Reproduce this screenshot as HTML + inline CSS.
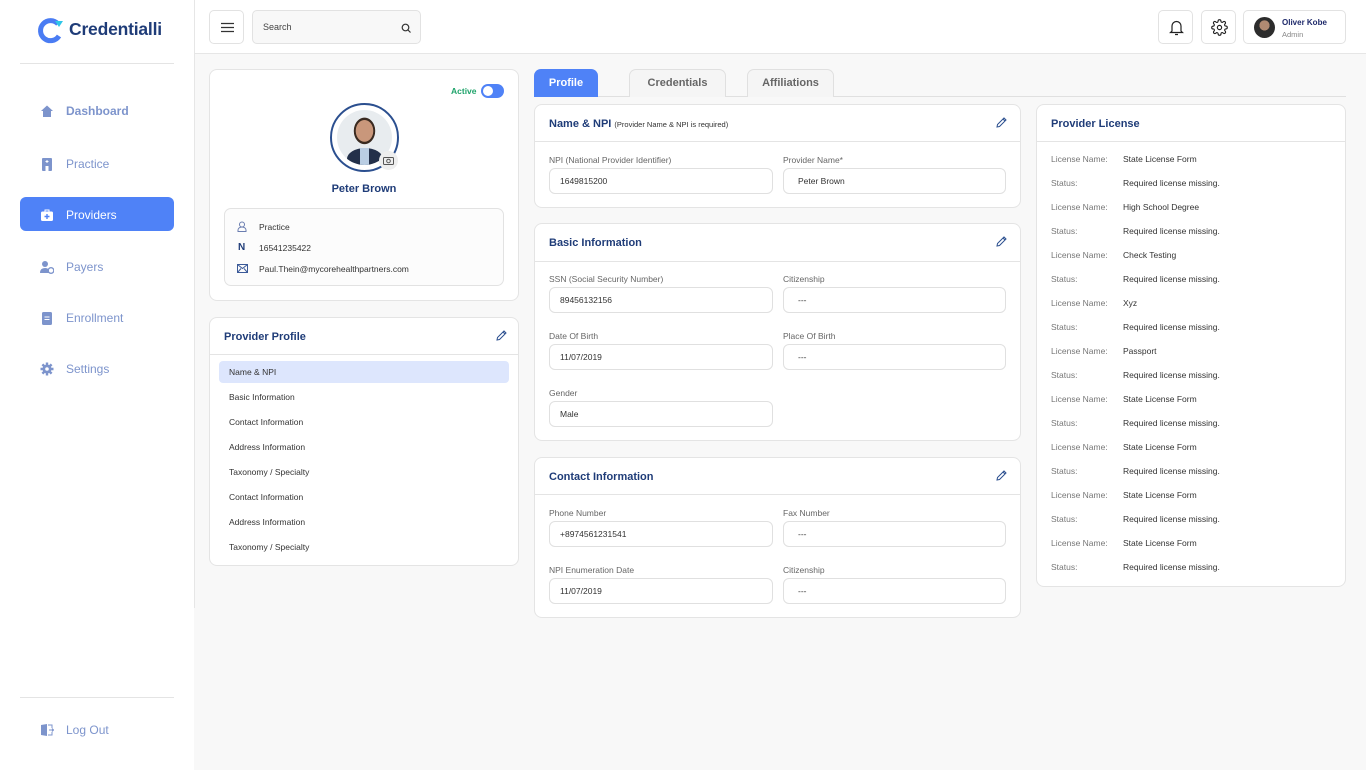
<!DOCTYPE html>
<html><head><meta charset="utf-8">
<style>
*{box-sizing:border-box;margin:0;padding:0}
body{width:1366px;height:770px;background:#f8f8f8;font-family:"Liberation Sans",sans-serif;position:relative;overflow:hidden;color:#333}
.a{position:absolute}
.side{left:0;top:0;width:194px;height:770px;background:#fff}
.sb{left:194px;top:0;width:1px;height:608px;background:#e6e6e6}
.nav{left:40px;width:130px;font-size:12px;color:#7d94cc;display:flex;align-items:center;height:20px}
.nav svg{width:14px;height:14px;margin-right:12px}
.hdr{left:195px;top:0;width:1171px;height:54px;background:#fff;border-bottom:1px solid #e6e6e6}
.box{border:1px solid #e2e2e2;border-radius:5px;background:#fff}
.card{background:#fff;border:1px solid #e4e4e4;border-radius:8px}
.ch{position:absolute;left:0;right:0;top:0;border-bottom:1px solid #e4e4e4}
.ct{position:absolute;left:14px;font-size:11px;font-weight:bold;color:#1f3c78;white-space:nowrap}
.lbl{font-size:8.5px;color:#666}
.inp{border:1px solid #e0e0e0;border-radius:6px;height:26px;font-size:8.5px;color:#333;padding:0 10px;display:flex;align-items:center;background:#fff}
.pi{left:229px;font-size:8.5px;color:#333;white-space:nowrap}
.lr{font-size:8.5px;left:0;width:290px;height:12px;white-space:nowrap}
.lr .k{position:absolute;left:0;color:#777}
.lr .v{position:absolute;left:72px;color:#333}
</style></head><body>
<div class="a side"></div>
<div class="a sb"></div>
<svg class="a" style="left:37px;top:17px" width="28" height="27" viewBox="0 0 28 27"><path d="M21 7 A10 10 0 1 0 22 19" fill="none" stroke="#4a7cf3" stroke-width="5"/><path d="M18 4 L26 4 L22 10Z" fill="#2ec6e8"/></svg>
<div class="a" style="left:69px;top:19px;font-size:17.5px;font-weight:bold;color:#1f3c78;letter-spacing:-0.2px">Credentialli</div>
<div class="a" style="left:20px;top:63px;width:154px;height:1px;background:#e4e4e4"></div>
<div class="a nav" style="top:101px;font-weight:bold"><svg viewBox="0 0 14 14"><path d="M1 7 L7 1.5 L13 7 H11 V13 H3 V7Z" fill="#7d94cc"/></svg>Dashboard</div>
<div class="a nav" style="top:154px"><svg viewBox="0 0 14 14"><rect x="2" y="1" width="10" height="13" rx="1" fill="#7d94cc"/><rect x="5.5" y="9" width="3" height="5" fill="#fff"/><path d="M7 3v3M5.5 4.5h3" stroke="#fff" stroke-width="1"/></svg>Practice</div>
<div class="a" style="left:20px;top:197px;width:154px;height:34px;background:#4f82f7;border-radius:6px"></div>
<div class="a nav" style="top:205px;color:#fff"><svg viewBox="0 0 14 14"><rect x="1" y="3.5" width="12" height="9.5" rx="1.5" fill="#fff"/><path d="M5 3.5V2h4v1.5" stroke="#fff" fill="none"/><path d="M7 6v5M4.5 8.5h5" stroke="#4f82f7" stroke-width="1.4"/></svg>Providers</div>
<div class="a nav" style="top:257px"><svg viewBox="0 0 14 14"><circle cx="5" cy="4" r="3" fill="#7d94cc"/><path d="M0 13 Q0 8 5 8 Q8 8 9 10 V13Z" fill="#7d94cc"/><circle cx="11" cy="10.5" r="2.8" fill="none" stroke="#7d94cc" stroke-width="1.3"/></svg>Payers</div>
<div class="a nav" style="top:308px"><svg viewBox="0 0 14 14"><rect x="2" y="1" width="10" height="13" rx="1.5" fill="#7d94cc"/><path d="M4.5 6h5M4.5 8.5h5" stroke="#fff"/></svg>Enrollment</div>
<div class="a nav" style="top:359px"><svg viewBox="0 0 14 14"><circle cx="7" cy="7" r="4.5" fill="#7d94cc"/><path d="M7 0.5v13M0.5 7h13M2.4 2.4l9.2 9.2M11.6 2.4l-9.2 9.2" stroke="#7d94cc" stroke-width="2.4"/><circle cx="7" cy="7" r="1.8" fill="#fff"/></svg>Settings</div>
<div class="a" style="left:20px;top:697px;width:154px;height:1px;background:#e4e4e4"></div>
<div class="a nav" style="top:720px"><svg viewBox="0 0 14 14"><path d="M1 2 L7 1 V13 L1 12Z" fill="#7d94cc"/><path d="M8 2h4v3M12 9v3H8M9 7h5M12 5.5l1.5 1.5-1.5 1.5" stroke="#7d94cc" fill="none"/></svg>Log Out</div>

<div class="a hdr"></div>
<div class="a box" style="left:209px;top:10px;width:35px;height:34px"><svg class="a" style="left:11px;top:11px" width="13" height="11"><path d="M0 1.5h13M0 5.5h13M0 9.5h13" stroke="#333" stroke-width="1.3"/></svg></div>
<div class="a box" style="left:252px;top:10px;width:169px;height:34px;background:#f8f8f8;font-size:9px;color:#444;padding:11px 10px">Search<svg class="a" style="right:9px;top:12px" width="10" height="10"><circle cx="4.5" cy="4.5" r="3.3" stroke="#333" fill="none" stroke-width="1.2"/><path d="M7 7l2.5 2.5" stroke="#333" stroke-width="1.2"/></svg></div>
<div class="a box" style="left:1158px;top:10px;width:35px;height:34px"><svg class="a" style="left:10px;top:8px" width="15" height="17" viewBox="0 0 15 17"><path d="M3 12V7a4.5 4.5 0 0 1 9 0v5l1.5 1.5h-12Z M6 15.5h3" stroke="#222" fill="none" stroke-width="1.2"/></svg></div>
<div class="a box" style="left:1201px;top:10px;width:35px;height:34px"><svg class="a" style="left:9px;top:8px" width="17" height="17" viewBox="0 0 24 24"><circle cx="12" cy="12" r="3" stroke="#222" fill="none" stroke-width="1.6"/><path d="M19.4 15a1.7 1.7 0 0 0 .3 1.8l.1.1a2 2 0 1 1-2.8 2.8l-.1-.1a1.7 1.7 0 0 0-1.8-.3 1.7 1.7 0 0 0-1 1.5V21a2 2 0 1 1-4 0v-.1a1.7 1.7 0 0 0-1.1-1.5 1.7 1.7 0 0 0-1.800.3l-.1.1a2 2 0 1 1-2.8-2.8l.1-.1a1.7 1.7 0 0 0 .3-1.8 1.7 1.7 0 0 0-1.5-1H3a2 2 0 1 1 0-4h.1a1.7 1.7 0 0 0 1.5-1.1 1.7 1.7 0 0 0-.3-1.8l-.1-.1a2 2 0 1 1 2.8-2.8l.1.1a1.7 1.7 0 0 0 1.8.3H9a1.7 1.7 0 0 0 1-1.5V3a2 2 0 1 1 4 0v.1a1.7 1.7 0 0 0 1 1.5 1.7 1.7 0 0 0 1.8-.3l.1-.1a2 2 0 1 1 2.8 2.8l-.1.1a1.7 1.7 0 0 0-.3 1.8V9a1.7 1.7 0 0 0 1.5 1H21a2 2 0 1 1 0 4h-.1a1.7 1.7 0 0 0-1.5 1z" stroke="#222" fill="none" stroke-width="1.6"/></svg></div>
<div class="a box" style="left:1243px;top:10px;width:103px;height:34px">
<div class="a" style="left:10px;top:6px;width:21px;height:21px;border-radius:50%;background:radial-gradient(circle at 50% 40%,#b08a72 0 30%,#2c2c2c 32%)"></div>
<div class="a" style="left:38px;top:7px;font-size:8px;font-weight:bold;color:#1f2a6b">Oliver Kobe</div>
<div class="a" style="left:38px;top:19px;font-size:7.5px;color:#888">Admin</div></div>

<div class="a card" style="left:209px;top:69px;width:310px;height:232px"></div>
<div class="a" style="left:451px;top:86px;font-size:8.5px;font-weight:bold;color:#1ea36a">Active</div>
<div class="a" style="left:481px;top:84px;width:23px;height:14px;border-radius:7px;background:#4f82f7"><div class="a" style="left:2px;top:2px;width:10px;height:10px;border-radius:50%;background:#fff"></div></div>
<div class="a" style="left:330px;top:103px;width:69px;height:69px;border-radius:50%;border:2px solid #2b4f8f"></div>
<div class="a" style="left:337px;top:110px;width:55px;height:55px;border-radius:50%;background:radial-gradient(ellipse at 50% 38%,#c9977b 0 22%,#3a2a20 23% 27%,#e8ecef 28%);overflow:hidden"><div class="a" style="left:10px;top:38px;width:36px;height:22px;border-radius:50% 50% 0 0;background:#23304a"></div><div class="a" style="left:23px;top:38px;width:9px;height:17px;background:#b9cde3"></div></div>
<div class="a" style="left:379px;top:151px;width:19px;height:19px;border-radius:50%;background:#eee"><svg class="a" style="left:4px;top:5px" width="11" height="9"><rect x="0.5" y="1.5" width="10" height="7" rx="1" stroke="#555" fill="none"/><circle cx="5.5" cy="5" r="1.8" stroke="#555" fill="none"/></svg></div>
<div class="a" style="left:209px;width:310px;top:183px;text-align:center;font-size:11px;font-weight:bold;color:#1f3c78">Peter Brown</div>
<div class="a" style="left:224px;top:208px;width:280px;height:78px;border:1px solid #e2e2e2;border-radius:7px;background:#fcfcfc"></div>
<svg class="a" style="left:237px;top:221px" width="10" height="11"><circle cx="5" cy="3.5" r="2.5" stroke="#6a7db0" fill="none"/><path d="M1 10.5v-1.5a4 3 0 0 1 8 0v1.5z" stroke="#6a7db0" fill="none"/></svg>
<div class="a pi" style="left:259px;top:222px">Practice</div>
<div class="a" style="left:238px;top:242px;font-size:10px;font-weight:bold;color:#1f3c78">N</div>
<div class="a pi" style="left:259px;top:243px">16541235422</div>
<svg class="a" style="left:237px;top:264px" width="11" height="9"><rect x="0.5" y="0.5" width="10" height="8" stroke="#3b5a99" fill="none"/><path d="M0.5 0.5l5 4 5-4M0.5 8.5l3.5-4M10.5 8.5l-3.5-4" stroke="#3b5a99" fill="none"/></svg>
<div class="a pi" style="left:259px;top:264px">Paul.Thein@mycorehealthpartners.com</div>

<div class="a card" style="left:209px;top:317px;width:310px;height:249px"><div class="ch" style="height:37px"></div><div class="ct" style="top:13px">Provider Profile</div>
<svg class="a" style="right:11px;top:12px" width="11" height="11"><path d="M1 10l0.5-2.5 6.5-6.5 2 2-6.5 6.5z M7 2l2 2" stroke="#2b4f8f" fill="none"/></svg></div>
<div class="a" style="left:219px;top:361px;width:290px;height:22px;background:#dde6fd;border-radius:4px"></div>
<div class="a pi" style="top:367px">Name &amp; NPI</div>
<div class="a pi" style="top:392px">Basic Information</div>
<div class="a pi" style="top:417px">Contact Information</div>
<div class="a pi" style="top:442px">Address Information</div>
<div class="a pi" style="top:467px">Taxonomy / Specialty</div>
<div class="a pi" style="top:492px">Contact Information</div>
<div class="a pi" style="top:517px">Address Information</div>
<div class="a pi" style="top:542px">Taxonomy / Specialty</div>

<div class="a" style="left:534px;top:96px;width:812px;height:1px;background:#e0e0e0"></div>
<div class="a" style="left:534px;top:69px;width:64px;height:28px;background:#4f82f7;border-radius:7px 7px 0 0;color:#fff;font-size:11px;font-weight:bold;text-align:center;line-height:28px">Profile</div>
<div class="a" style="left:629px;top:69px;width:97px;height:28px;background:#f5f5f5;border:1px solid #e0e0e0;border-bottom:none;border-radius:7px 7px 0 0;color:#666;font-size:11px;font-weight:bold;text-align:center;line-height:27px">Credentials</div>
<div class="a" style="left:747px;top:69px;width:87px;height:28px;background:#f5f5f5;border:1px solid #e0e0e0;border-bottom:none;border-radius:7px 7px 0 0;color:#666;font-size:11px;font-weight:bold;text-align:center;line-height:27px">Affiliations</div>

<div class="a card" style="left:534px;top:104px;width:487px;height:104px"><div class="ch" style="height:37px"></div><div class="ct" style="top:13px">Name &amp; NPI <span style="font-size:7.5px;font-weight:normal;color:#333">(Provider Name &amp; NPI is required)</span></div>
<svg class="a" style="right:13px;top:12px" width="11" height="11"><path d="M1 10l0.5-2.5 6.5-6.5 2 2-6.5 6.5z M7 2l2 2" stroke="#2b4f8f" fill="none"/></svg></div>
<div class="a lbl" style="left:549px;top:155px">NPI (National Provider Identifier)</div>
<div class="a lbl" style="left:783px;top:155px">Provider Name*</div>
<div class="a inp" style="left:549px;top:168px;width:224px">1649815200</div>
<div class="a inp" style="left:783px;top:168px;width:223px;padding-left:14px">Peter Brown</div>

<div class="a card" style="left:534px;top:223px;width:487px;height:218px"><div class="ch" style="height:38px"></div><div class="ct" style="top:13px">Basic Information</div>
<svg class="a" style="right:13px;top:12px" width="11" height="11"><path d="M1 10l0.5-2.5 6.5-6.5 2 2-6.5 6.5z M7 2l2 2" stroke="#2b4f8f" fill="none"/></svg></div>
<div class="a lbl" style="left:549px;top:274px">SSN (Social Security Number)</div>
<div class="a lbl" style="left:783px;top:274px">Citizenship</div>
<div class="a inp" style="left:549px;top:287px;width:224px">89456132156</div>
<div class="a inp" style="left:783px;top:287px;width:223px;padding-left:14px">---</div>
<div class="a lbl" style="left:549px;top:331px">Date Of Birth</div>
<div class="a lbl" style="left:783px;top:331px">Place Of Birth</div>
<div class="a inp" style="left:549px;top:344px;width:224px">11/07/2019</div>
<div class="a inp" style="left:783px;top:344px;width:223px;padding-left:14px">---</div>
<div class="a lbl" style="left:549px;top:388px">Gender</div>
<div class="a inp" style="left:549px;top:401px;width:224px">Male</div>

<div class="a card" style="left:534px;top:457px;width:487px;height:161px"><div class="ch" style="height:37px"></div><div class="ct" style="top:13px">Contact Information</div>
<svg class="a" style="right:13px;top:12px" width="11" height="11"><path d="M1 10l0.5-2.5 6.5-6.5 2 2-6.5 6.5z M7 2l2 2" stroke="#2b4f8f" fill="none"/></svg></div>
<div class="a lbl" style="left:549px;top:508px">Phone Number</div>
<div class="a lbl" style="left:783px;top:508px">Fax Number</div>
<div class="a inp" style="left:549px;top:521px;width:224px">+8974561231541</div>
<div class="a inp" style="left:783px;top:521px;width:223px;padding-left:14px">---</div>
<div class="a lbl" style="left:549px;top:565px">NPI Enumeration Date</div>
<div class="a lbl" style="left:783px;top:565px">Citizenship</div>
<div class="a inp" style="left:549px;top:578px;width:224px">11/07/2019</div>
<div class="a inp" style="left:783px;top:578px;width:223px;padding-left:14px">---</div>

<div class="a card" style="left:1036px;top:104px;width:310px;height:483px"><div class="ch" style="height:37px"></div><div class="ct" style="top:13px">Provider License</div></div>
<div class="a" style="left:1051px;top:154px;width:290px;height:430px">
<div class="a lr" style="top:0"><span class="k">License Name:</span><span class="v">State License Form</span></div>
<div class="a lr" style="top:24px"><span class="k">Status:</span><span class="v">Required license missing.</span></div>
<div class="a lr" style="top:48px"><span class="k">License Name:</span><span class="v">High School Degree</span></div>
<div class="a lr" style="top:72px"><span class="k">Status:</span><span class="v">Required license missing.</span></div>
<div class="a lr" style="top:96px"><span class="k">License Name:</span><span class="v">Check Testing</span></div>
<div class="a lr" style="top:120px"><span class="k">Status:</span><span class="v">Required license missing.</span></div>
<div class="a lr" style="top:144px"><span class="k">License Name:</span><span class="v">Xyz</span></div>
<div class="a lr" style="top:168px"><span class="k">Status:</span><span class="v">Required license missing.</span></div>
<div class="a lr" style="top:192px"><span class="k">License Name:</span><span class="v">Passport</span></div>
<div class="a lr" style="top:216px"><span class="k">Status:</span><span class="v">Required license missing.</span></div>
<div class="a lr" style="top:240px"><span class="k">License Name:</span><span class="v">State License Form</span></div>
<div class="a lr" style="top:264px"><span class="k">Status:</span><span class="v">Required license missing.</span></div>
<div class="a lr" style="top:288px"><span class="k">License Name:</span><span class="v">State License Form</span></div>
<div class="a lr" style="top:312px"><span class="k">Status:</span><span class="v">Required license missing.</span></div>
<div class="a lr" style="top:336px"><span class="k">License Name:</span><span class="v">State License Form</span></div>
<div class="a lr" style="top:360px"><span class="k">Status:</span><span class="v">Required license missing.</span></div>
<div class="a lr" style="top:384px"><span class="k">License Name:</span><span class="v">State License Form</span></div>
<div class="a lr" style="top:408px"><span class="k">Status:</span><span class="v">Required license missing.</span></div>
</div>
</body></html>
